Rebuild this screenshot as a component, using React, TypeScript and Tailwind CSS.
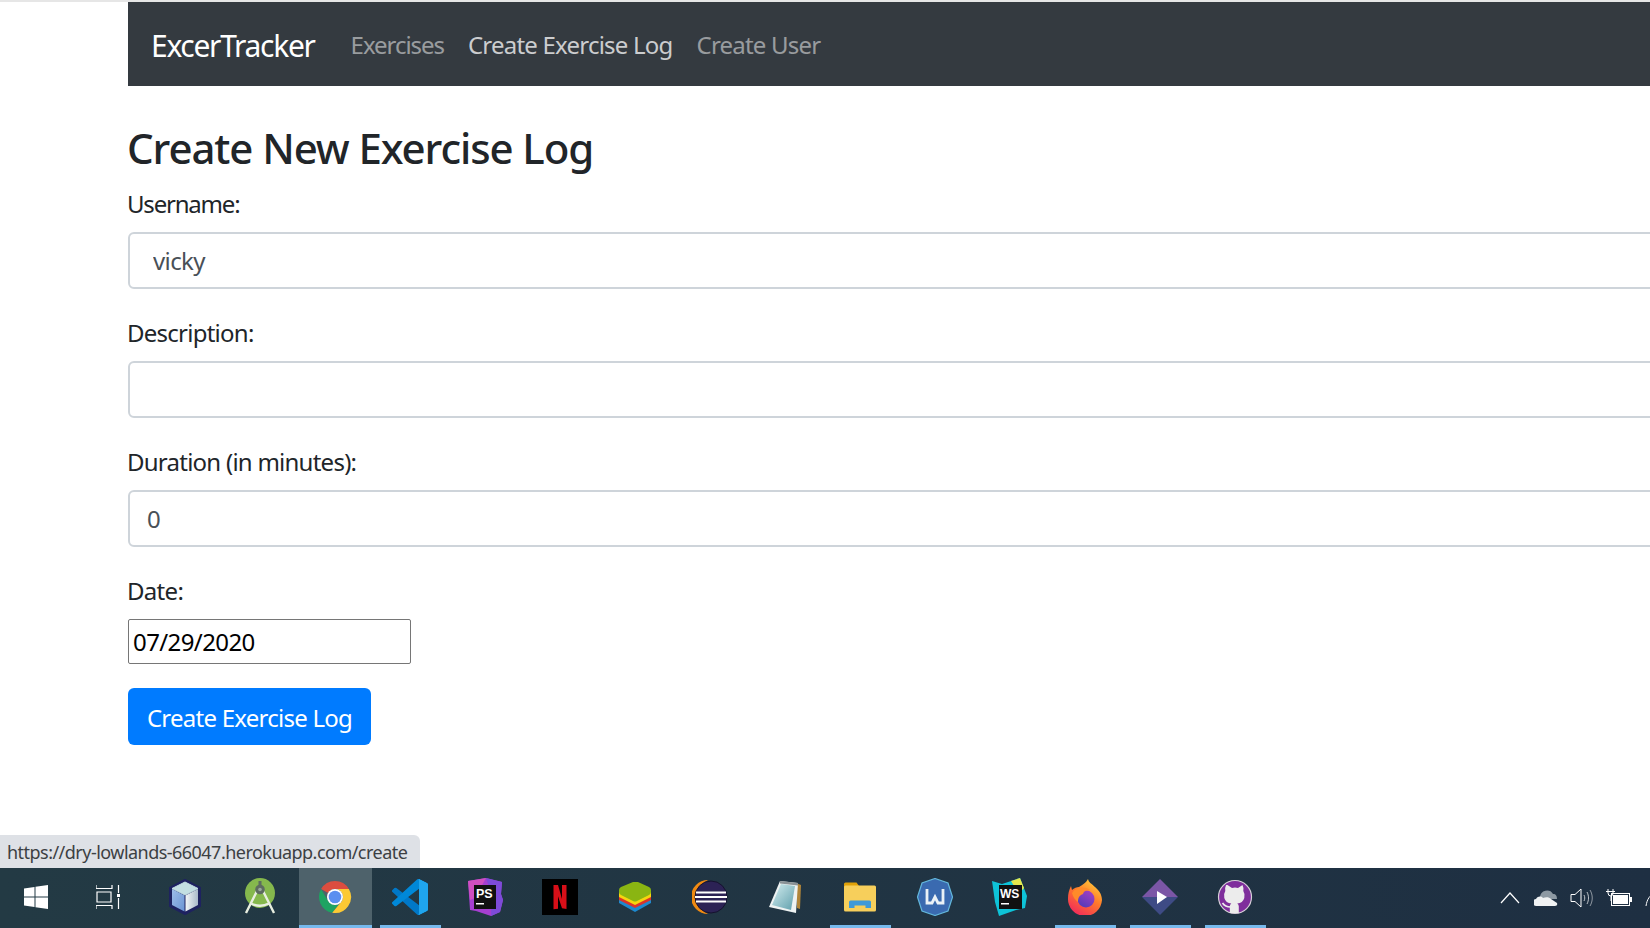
import React from 'react'

const font = 'font-["Noto_Sans",sans-serif]'

function WindowsIcon() {
  return (
    <svg width="24" height="24" viewBox="0 0 24 24" fill="white" className="ml-[3px]">
      <path d="M0 3.500 10.500 2v9.500H0zM11.500 1.800 24 0v11.500H11.500zM0 12.500h10.500V22L0 20.500zM11.500 12.500H24V24l-12.500-1.800z" />
    </svg>
  )
}

function TaskViewIcon() {
  return (
    <svg width="24" height="24" viewBox="0 0 24 24" fill="none" stroke="white" strokeWidth="1.200" className="mr-[3px]">
      <path d="M0 0v3.500h16V0M1 7h14v10H1zM0 24v-3.500h16V24M22.500 0v8M22.500 13v11" />
      <rect x="21" y="9" width="3" height="3" fill="white" stroke="none" />
    </svg>
  )
}

function CubeIcon() {
  return (
    <svg width="34" height="38" viewBox="0 0 34 38">
      <defs>
        <linearGradient id="cubeLeft" x1="0" y1="0" x2="1" y2="1">
          <stop offset="0" stopColor="#9dbde8" />
          <stop offset="1" stopColor="#6a94d4" />
        </linearGradient>
        <linearGradient id="cubeRight" x1="0" y1="0" x2="1" y2="0">
          <stop offset="0" stopColor="#f2f6f8" />
          <stop offset="1" stopColor="#a9b9c9" />
        </linearGradient>
      </defs>
      <path d="M17 2 32 10v18l-15 8-15-8V10z" fill="#1e2260" stroke="#1e2260" strokeWidth="2" strokeLinejoin="round" />
      <path d="M17 4 30 10.500 17 17 4 10.500z" fill="#c3dfe2" stroke="#c3dfe2" strokeLinejoin="round" />
      <path d="M4 11 16.500 17.500V33.500L4 27z" fill="url(#cubeLeft)" />
      <path d="M30 11 17.500 17.500V33.500L30 27z" fill="url(#cubeRight)" />
    </svg>
  )
}

function AndroidStudioIcon() {
  return (
    <svg width="34" height="38" viewBox="0 0 34 38">
      <circle cx="17" cy="15" r="15" fill="#85b84d" />
      <path d="M3 35 14 13M31 35 20 13M8 25.500c6 3 12 3 18 0" fill="none" stroke="#e8eee0" strokeWidth="2.400" />
      <circle cx="17" cy="11.500" r="4.800" fill="#5d6b60" />
      <circle cx="17" cy="11.500" r="1.800" fill="#9aa69c" />
      <rect x="15.500" y="3" width="3" height="5" fill="#5d6b60" />
    </svg>
  )
}

function ChromeIcon() {
  return (
    <svg width="34" height="34" viewBox="0 0 34 34">
      <path d="M17 1A16 16 0 0 1 30.860 9H17A8 8 0 0 0 10.070 13L3.140 9A16 16 0 0 1 17 1z" fill="#dc4d3f" />
      <path d="M3.140 9A16 16 0 0 0 14.200 32.750L21 23.900A8 8 0 0 1 10.070 21z" fill="#1ea362" />
      <path d="M17 9H30.860A16 16 0 0 1 14.200 32.750L23.930 21A8 8 0 0 0 17 9z" fill="#fcc934" />
      <circle cx="17" cy="17" r="8" fill="#fff" />
      <circle cx="17" cy="17" r="6.300" fill="#5a8ff0" />
    </svg>
  )
}

function VsCodeIcon() {
  return (
    <svg width="36" height="36" viewBox="0 0 100 100">
      <path d="M96.460 89.200 75.860 99.130a6.230 6.230 0 0 1-7.100-1.200L1.300 36.400a4.170 4.170 0 0 1 0-6.160l5.500-5a4.170 4.170 0 0 1 5.320-.24L93.300 86.600c2.730 2.070 6.650.12 6.650-3.300v.24a6.250 6.250 0 0 1-3.540 5.630z" fill="#0078c8" />
      <path d="M96.460 10.800 75.860.87a6.230 6.230 0 0 0-7.100 1.200L1.300 63.600a4.170 4.170 0 0 0 0 6.160l5.500 5a4.170 4.170 0 0 0 5.320.24L93.300 13.400c2.730-2.070 6.650-.12 6.650 3.300v-.24a6.250 6.250 0 0 0-3.540-5.630z" fill="#0088d8" />
      <path d="M71 98a6 6 0 0 0 4.860 1.130L96.460 89.200A6.250 6.250 0 0 0 100 83.570V16.430a6.250 6.250 0 0 0-3.540-5.630L75.860.87A6.230 6.230 0 0 0 71 2c3-2 4 0 4 4v88c0 4-1 6-4 4z" fill="#1fa5ee" />
      <path d="M75 1v98l21-10c2-1 4-3 4-6V17c0-3-2-5-4-6z" fill="#1fa5ee" />
    </svg>
  )
}

function PhpStormIcon() {
  return (
    <svg width="36" height="38" viewBox="0 0 36 38">
      <path d="M1 3 19 0l16 4-1 12 2 6-3 12-9 4-15-5-6-1z" fill="#a53fd0" />
      <path d="M19 0l16 4-1 12 2 6-3 12-9 4 1-20z" fill="#7d4bd8" />
      <path d="M1 3 19 0 8 20 3 22z" fill="#d04fc0" />
      <rect x="7" y="7" width="22" height="24" fill="#111" />
      <text x="9" y="20" fill="white" fontSize="12.500" fontWeight="700" fontFamily="Liberation Sans">PS</text>
      <rect x="9" y="25" width="8" height="1.500" fill="white" />
    </svg>
  )
}

function NetflixIcon() {
  return (
    <svg width="36" height="36" viewBox="0 0 36 36">
      <rect width="36" height="36" fill="#000" />
      <path d="M11.500 6h4.500l4 14V6h4.500v24l-4.500-.8-4-12v12.500l-4.500.5z" fill="#d80f18" />
    </svg>
  )
}

function BlueStacksIcon() {
  return (
    <svg width="34" height="32" viewBox="0 0 34 32">
      <path d="M17 10 33 17v5L17 31 1 22v-5z" fill="#1d89cf" />
      <path d="M17 7 33 14v5L17 27 1 19v-5z" fill="#d9342b" />
      <path d="M17 4 33 11v5L17 24 1 16v-5z" fill="#f5d50e" />
      <path d="M15 1h5l11 5q2 1 2 3v2q0 2-2 3L19 20q-2 1-4 0L3 14q-2-1-2-3V9q0-2 2-3z" fill="#8ab512" />
    </svg>
  )
}

function EclipseIcon() {
  return (
    <svg width="36" height="36" viewBox="0 0 36 36">
      <path d="M16 1A17 17 0 0 0 16 35 19 19 0 0 1 16 1z" fill="#f08a12" />
      <circle cx="19" cy="18" r="16" fill="#2c2255" stroke="#15122e" strokeWidth="1" />
      <path d="M4 13.500h30M3 18h32M4 22.500h30" stroke="white" strokeWidth="2.200" />
    </svg>
  )
}

function NotepadIcon() {
  return (
    <svg width="34" height="34" viewBox="0 0 34 34">
      <defs>
        <linearGradient id="padPage" x1="0" y1="0" x2="1" y2="1">
          <stop offset="0" stopColor="#d5eef0" />
          <stop offset="1" stopColor="#5f9fac" />
        </linearGradient>
      </defs>
      <path d="M28 3 33 5 32 29 29 28z" fill="#b0853a" />
      <path d="M12 1 30 3 28 33 1 27z" fill="#eef2f2" />
      <path d="M13 4 27 6 23 30 4 25z" fill="url(#padPage)" />
      <path d="M12 1 30 3v2.500L12 3.500z" fill="#8a9296" />
    </svg>
  )
}

function FolderIcon() {
  return (
    <svg width="34" height="30" viewBox="0 0 34 30">
      <path d="M1 2q0-1.500 1.500-1.500h11L16 4v8H1z" fill="#e0a108" />
      <rect x="1" y="3.500" width="32" height="26" rx="1.500" fill="#f7cf5b" />
      <path d="M6 26v-6q0-1.500 1.500-1.500h19q1.500 0 1.500 1.500v6h-5.500v-2.500h-11V26z" fill="#3f9ad8" />
    </svg>
  )
}

function WindscribeIcon() {
  return (
    <svg width="36" height="38" viewBox="0 0 36 38">
      <path d="M18 .5 31 5l4.500 14L31 33l-13 4.500L5 33 .5 19 5 5z" fill="#3a6ab0" stroke="#63b7dc" strokeWidth="1.200" />
      <path d="M10 11v14h5l3-6 3 6h5V11" fill="none" stroke="#eaf1f6" strokeWidth="2.800" />
    </svg>
  )
}

function WebStormIcon() {
  return (
    <svg width="36" height="38" viewBox="0 0 36 38">
      <path d="M0 3 10 6 28 0l7 18-2 12-9 2-17 6-4-14z" fill="#0ec3d8" />
      <path d="M19 3l9-3 4 10-5 6z" fill="#e5e74c" />
      <rect x="7" y="7" width="23" height="24" fill="#111" />
      <text x="8" y="20" fill="white" fontSize="12" fontWeight="700" fontFamily="Liberation Sans">WS</text>
      <rect x="9" y="25" width="8" height="1.500" fill="white" />
    </svg>
  )
}

function FirefoxIcon() {
  return (
    <svg width="36" height="36" viewBox="0 0 36 36">
      <defs>
        <linearGradient id="foxBody" x1="0.8" y1="0" x2="0.2" y2="1">
          <stop offset="0" stopColor="#ffd23a" />
          <stop offset="0.45" stopColor="#ff7a2a" />
          <stop offset="1" stopColor="#f0245f" />
        </linearGradient>
        <linearGradient id="foxCore" x1="0.8" y1="0" x2="0.2" y2="1">
          <stop offset="0" stopColor="#a53fc4" />
          <stop offset="1" stopColor="#4f3bb8" />
        </linearGradient>
      </defs>
      <path d="M21 0c1 6 14 9 14 21A17 17 0 0 1 1 19C1 15 2 11 4 7l1 4c2-2 5-3 7-3 3-2 7-4 9-8z" fill="url(#foxBody)" />
      <circle cx="19" cy="20" r="8.500" fill="url(#foxCore)" />
      <path d="M5 14c4-6 12-7 18-3-4 0-6 1-7 4-3 1-5 3-5 8-3-2-5-5-6-9z" fill="#ff8a2a" />
    </svg>
  )
}

function StremioIcon() {
  return (
    <svg width="36" height="36" viewBox="0 0 36 36">
      <path d="M18 0 36 18H0z" fill="#7b56a6" />
      <path d="M0 18h36L18 36z" fill="#3e4b85" />
      <path d="M15 12l10 6-10 7z" fill="white" />
    </svg>
  )
}

function GithubDesktopIcon() {
  return (
    <svg width="36" height="36" viewBox="0 0 36 36">
      <circle cx="18" cy="18" r="16.500" fill="#7f2e9c" stroke="#d6d0d8" strokeWidth="1.200" />
      <path d="M10.500 6l4.500 3q3-.8 6 0l4.500-3q1.500 3 .8 6 2 3 1 7-1.500 5-7 5.500 1.500 1 1.500 3V34h-9V27.500q0-2 1.500-3-5.500-.5-7-5.500-1-4 1-7-.7-3 .8-6z" fill="#ececec" />
      <path d="M5.500 24c2 3 4 4 8 4" fill="none" stroke="#ececec" strokeWidth="1.600" />
    </svg>
  )
}

const taskbarItems: { icon: React.ReactNode; running?: boolean; active?: boolean }[] = [
  { icon: <WindowsIcon /> },
  { icon: <TaskViewIcon /> },
  { icon: <CubeIcon /> },
  { icon: <AndroidStudioIcon /> },
  { icon: <ChromeIcon />, active: true, running: true },
  { icon: <VsCodeIcon />, running: true },
  { icon: <PhpStormIcon /> },
  { icon: <NetflixIcon /> },
  { icon: <BlueStacksIcon /> },
  { icon: <EclipseIcon /> },
  { icon: <NotepadIcon /> },
  { icon: <FolderIcon />, running: true },
  { icon: <WindscribeIcon /> },
  { icon: <WebStormIcon /> },
  { icon: <FirefoxIcon />, running: true },
  { icon: <StremioIcon />, running: true },
  { icon: <GithubDesktopIcon />, running: true },
]

function TrayIcons() {
  return (
    <div className="flex items-center -mr-[15px]">
      <svg width="20" height="14" viewBox="0 0 20 14" fill="none" stroke="white" strokeWidth="1.200" className="mr-[14px]">
        <path d="M1 12 10 2l9 10" />
      </svg>
      <svg width="24" height="18" viewBox="0 0 24 18" className="mr-[12px]">
        <path d="M6 8a7 7 0 0 1 13-3c3 0 4 2 4 5H6z" fill="#8d99a3" />
        <path d="M3 17a3.500 3.500 0 0 1-1-7c2-3 5-3 7-1 3-1 6-1 8 1l6 4q1 3-2 3z" fill="#f0f2f3" />
      </svg>
      <svg width="24" height="20" viewBox="0 0 24 20" fill="none" stroke="white" strokeWidth="1" className="mr-[12px]">
        <path d="M1 6.500h4L11 1v18l-6-5.500H1z" />
        <path d="M14 7c1 2 1 4 0 6M17 4c2 4 2 8 0 12" strokeOpacity="0.7" />
        <path d="M20 2c3 5 3 11 0 16" strokeOpacity="0.5" />
      </svg>
      <svg width="26" height="20" viewBox="0 0 26 20" fill="none" stroke="white" strokeWidth="1" className="mr-[13px]">
        <rect x="5.500" y="5.500" width="18" height="12" />
        <rect x="7" y="7" width="15" height="9" fill="white" stroke="none" />
        <rect x="24" y="9" width="2" height="5" fill="white" stroke="none" />
        <path d="M2 1v4q0 3 3 3v5M7 1v4q0 3-2 3M0 3.500h9" />
      </svg>
      <svg width="20" height="20" viewBox="0 0 20 20" fill="none" stroke="white" strokeWidth="1">
        <path d="M1 18C2 11 5 7 10 5" />
      </svg>
    </div>
  )
}

function Field({ label, value, valueClass, labelClass }: { label: string; value?: string; valueClass: string; labelClass: string }) {
  return (
    <div className="mb-[26px]">
      <label className={`block -ml-[1px] mb-[10px] text-[24px] leading-[36px] text-[#212529] ${labelClass}`}>{label}</label>
      <input
        readOnly
        value={value ?? ''}
        className={`block w-[1600px] h-[57px] rounded-[6px] border-2 border-[#ced4da] bg-white text-[24px] text-[#495057] tracking-[-0.6px] outline-none ${valueClass}`}
      />
    </div>
  )
}

export default function App() {
  return (
    <div className={`relative flex flex-col w-[1650px] h-[928px] overflow-hidden bg-white ${font}`}>
      <div className="h-[2px] shrink-0 bg-[#e6e6e6]" />

      <main className="flex-1 pl-[128px]">
        <nav className="flex items-center w-[1600px] h-[84px] bg-[#343a40] pl-[23px] pt-[2px]">
          <span className="text-[30px] text-white tracking-[-1.3px] mr-[36px]">ExcerTracker</span>
          <div className="flex items-center gap-[24px] text-[24px]">
            <span className="text-white/50 tracking-[-1.05px]">Exercises</span>
            <span className="text-white/75 tracking-[-0.78px]">Create Exercise Log</span>
            <span className="text-white/50 tracking-[-0.8px]">Create User</span>
          </div>
        </nav>

        <h3 className="-ml-[1px] mt-[37px] mb-[13px] text-[42px] leading-[50px] font-medium text-[#212529] tracking-[-1.1px]">
          Create New Exercise Log
        </h3>

        <form>
          <Field label="Username:" value="vicky" valueClass="pl-[23px]" labelClass="tracking-[-1.2px]" />
          <Field label="Description:" valueClass="pl-[18px]" labelClass="tracking-[-0.75px]" />
          <Field label="Duration (in minutes):" value="0" valueClass="pl-[17px]" labelClass="tracking-[-0.75px]" />
          <div className="mb-[24px]">
            <label className="block -ml-[1px] mb-[10px] text-[24px] leading-[36px] text-[#212529] tracking-[-0.7px]">Date:</label>
            <input
              readOnly
              value="07/29/2020"
              className="block w-[283px] h-[45px] pl-[4px] pr-[5px] rounded-[2px] border border-[#767676] text-[24px] text-black tracking-[-0.6px] outline-none"
            />
          </div>
          <button
            type="button"
            className="h-[57px] w-[243px] pt-[2px] rounded-[6px] bg-[#007bff] text-[24px] text-white tracking-[-0.75px]"
          >
            Create Exercise Log
          </button>
        </form>
      </main>

      {/* Link preview bubble sits over the page */}
      <div className="absolute left-0 bottom-[60px] w-[420px] h-[33px] pl-[7px] rounded-tr-[6px] bg-[#dee1e6] text-[18px] leading-[35px] text-[#3c4043] tracking-[-0.53px] whitespace-nowrap">
        https://dry-lowlands-66047.herokuapp.com/create
      </div>

      <footer className="flex shrink-0 items-center justify-between h-[60px] bg-gradient-to-r from-[#233a44] to-[#1e2f42] text-white">
        <div className="flex h-full -ml-[3px]">
          {taskbarItems.map((item, i) => (
            <div key={i} className="relative flex w-[75px] h-full items-center justify-center pb-[2px]">
              {item.active && <span className="absolute inset-y-0 left-[2px] right-0 bg-[#4e626b]" />}
              <span className="relative flex">{item.icon}</span>
              {item.running && (
                <span
                  className={`absolute bottom-0 h-[3px] bg-[#76b9ed] ${item.active ? 'left-[2px] right-0' : 'left-[8px] right-[6px]'}`}
                />
              )}
            </div>
          ))}
        </div>
        <TrayIcons />
      </footer>
    </div>
  )
}
